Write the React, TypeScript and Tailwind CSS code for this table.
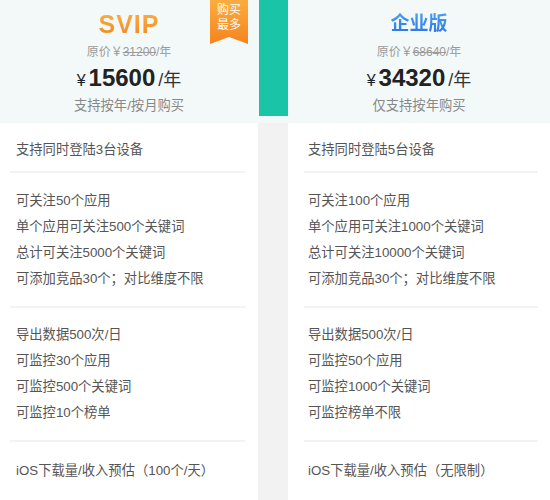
const font = { fontFamily: '"Liberation Sans", "Noto Sans CJK SC", sans-serif' };

interface Plan {
  title: string;
  titleClass: string;
  original: string;
  price: string;
  note: string;
  devices: string;
  follow: string[];
  monitor: string[];
  ios: string;
}

const plans: Plan[] = [
  {
    title: 'SVIP',
    titleClass: 'text-[25px] tracking-[1px] font-bold from-[#fbb244] to-[#f0871f]',
    original: '31200',
    price: '15600',
    note: '支持按年/按月购买',
    devices: '支持同时登陆3台设备',
    follow: ['可关注50个应用', '单个应用可关注500个关键词', '总计可关注5000个关键词', '可添加竞品30个；对比维度不限'],
    monitor: ['导出数据500次/日', '可监控30个应用', '可监控500个关键词', '可监控10个榜单'],
    ios: 'iOS下载量/收入预估（100个/天）',
  },
  {
    title: '企业版',
    titleClass: 'text-[19px] font-bold from-[#4aa3f6] to-[#2a6ddf]',
    original: '68640',
    price: '34320',
    note: '仅支持按年购买',
    devices: '支持同时登陆5台设备',
    follow: ['可关注100个应用', '单个应用可关注1000个关键词', '总计可关注10000个关键词', '可添加竞品30个；对比维度不限'],
    monitor: ['导出数据500次/日', '可监控50个应用', '可监控1000个关键词', '可监控榜单不限'],
    ios: 'iOS下载量/收入预估（无限制）',
  },
];

function Divider ({ className }: { className: string }) {
  return <div className={`h-[2px] bg-[#f3f3f3] ${className}`} />;
}

function PlanCard ({ plan, left }: { plan: Plan; left: boolean }) {
  const textPad = left ? 'pl-4' : 'pl-5';
  const lineMargin = left ? 'ml-[10px] mr-[13px]' : 'ml-4 mr-3';

  return (
    <div className={left ? 'w-[258px] shrink-0 flex flex-col' : 'flex-1 flex flex-col'}>
      {/* Header */}
      <div className="relative h-[123px] bg-[#f3f9f9] flex flex-col items-center pt-[10px]">
        <div className={`leading-[28px] bg-linear-to-b bg-clip-text text-transparent ${plan.titleClass}`}>
          {plan.title}
        </div>
        <div className="mt-[5px] leading-[18px] text-[12px] text-[#9a9a9a]">
          原价￥<span className="line-through">{plan.original}</span>/年
        </div>
        <div className="mt-[1px] h-[32px] flex items-baseline text-[#222]">
          <span className="text-[16px] mr-[3px]">¥</span>
          <span className="text-[24px] font-bold leading-[32px]">{plan.price}</span>
          <span className="text-[18px] ml-[3px] text-[#333]">/年</span>
        </div>
        <div className="mt-[2px] leading-[20px] text-[13.3px] text-[#888]">{plan.note}</div>

        {left && (
          <div className="absolute top-0 right-[10px] w-[38px] h-[44px] pt-[3px] bg-linear-to-b from-[#fbac3f] to-[#f4841d] text-white text-[12px] leading-[15px] text-center [clip-path:polygon(0_0,100%_0,100%_100%,50%_84%,0_100%)]">
            <div>购买</div>
            <div>最多</div>
          </div>
        )}
      </div>

      {/* Body */}
      <div className="flex-1 bg-white text-[13.3px] leading-[26px] text-[#555]">
        <div className={`${textPad} pt-[14px] pb-[8px]`}>{plan.devices}</div>
        <Divider className={lineMargin} />
        <div className={`${textPad} pt-[15px] pb-[14px]`}>
          {plan.follow.map((item) => (
            <div key={item}>{item}</div>
          ))}
        </div>
        <Divider className={lineMargin} />
        <div className={`${textPad} pt-[14px] pb-[14px]`}>
          {plan.monitor.map((item) => (
            <div key={item}>{item}</div>
          ))}
        </div>
        <Divider className={lineMargin} />
        <div className={`${textPad} pt-[16px]`}>{plan.ios}</div>
      </div>
    </div>
  );
}

export default function App () {
  return (
    <div className="w-[550px] h-[500px] overflow-hidden flex bg-white" style={font}>
      <PlanCard plan={plans[0]} left />

      {/* Gap column */}
      <div className="w-[30px] shrink-0 flex flex-col">
        <div className="h-[123px] bg-[#f3f9f9]">
          <div className="h-[116px] ml-px bg-[#1ac4a7]" />
        </div>
        <div className="flex-1 bg-[#f2f2f3]" />
      </div>

      <PlanCard plan={plans[1]} left={false} />
    </div>
  );
}
